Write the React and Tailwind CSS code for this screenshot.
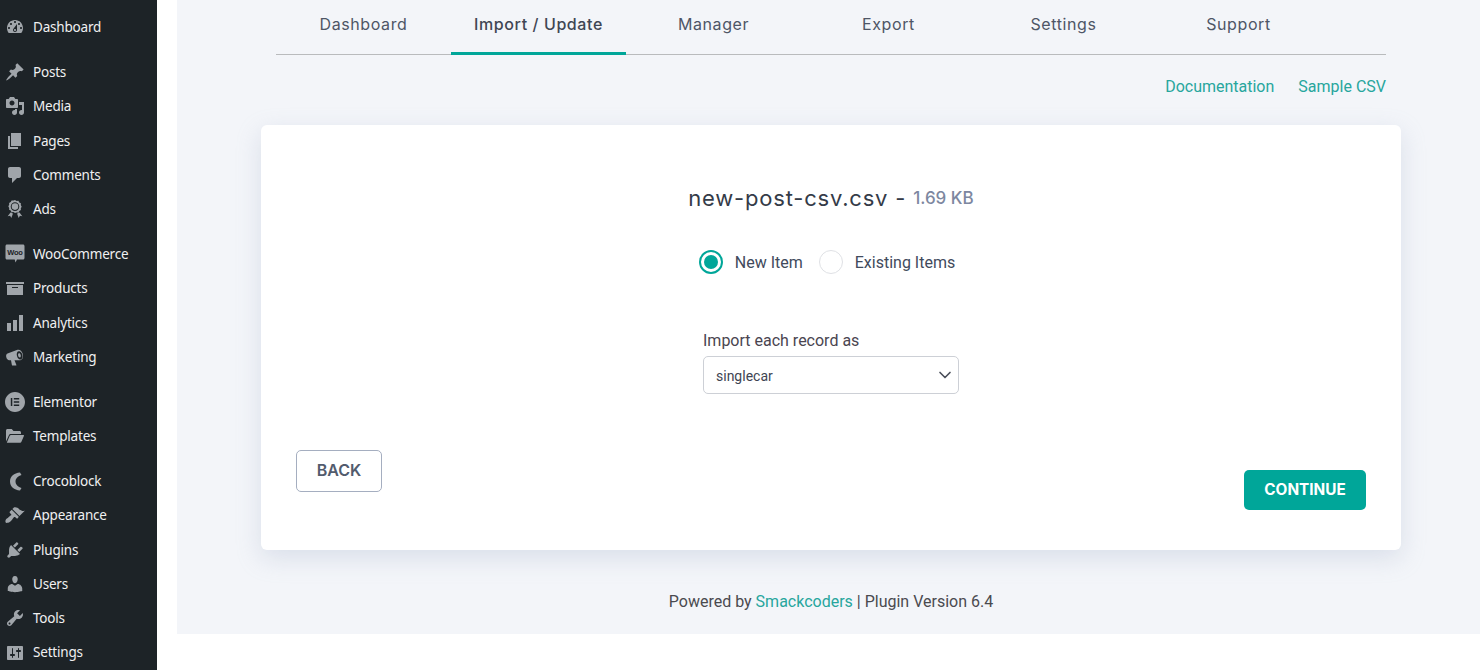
import React from "react";
import { ChevronDown } from "lucide-react";

const icons = {
  dashboard: "M3.76 16h12.48c1.1-1.37 1.76-3.11 1.76-5 0-4.42-3.58-8-8-8s-8 3.58-8 8c0 1.89.66 3.63 1.76 5zM10 4c.55 0 1 .45 1 1s-.45 1-1 1-1-.45-1-1 .45-1 1-1zM6 6c.55 0 1 .45 1 1s-.45 1-1 1-1-.45-1-1 .45-1 1-1zm8 0c.55 0 1 .45 1 1s-.45 1-1 1-1-.45-1-1 .45-1 1-1zm-5.37 5.55L12 7v6c0 1.1-.9 2-2 2s-2-.9-2-2c0-.57.24-1.08.63-1.45zM4 10c.55 0 1 .45 1 1s-.45 1-1 1-1-.45-1-1 .45-1 1-1zm12 0c.55 0 1 .45 1 1s-.45 1-1 1-1-.45-1-1 .45-1 1-1zm-5 3c0-.55-.45-1-1-1s-1 .45-1 1 .45 1 1 1 1-.45 1-1z",
  posts: "M10.44 3.02l1.82-1.82 6.36 6.35-1.83 1.82c-1.05-.68-2.48-.57-3.41.36l-.75.75c-.92.93-1.04 2.35-.35 3.41l-1.83 1.82-2.41-2.41-2.8 2.79c-.42.42-3.38 2.71-3.8 2.29s1.86-3.39 2.28-3.81l2.79-2.79L4.1 9.36l1.83-1.82c1.05.69 2.48.57 3.4-.36l.75-.75c.93-.92 1.05-2.35.36-3.41z",
  media: "M13 11V4c0-.55-.45-1-1-1h-1.67L9 1H5L3.67 3H2c-.55 0-1 .45-1 1v7c0 .55.45 1 1 1h10c.55 0 1-.45 1-1zM7 4.5c1.38 0 2.5 1.12 2.5 2.5S8.38 9.5 7 9.5 4.5 8.38 4.5 7 5.62 4.5 7 4.5zM14 6h5v10.5c0 1.38-1.12 2.5-2.5 2.5S14 17.88 14 16.5s1.12-2.5 2.5-2.5c.17 0 .34.02.5.05V9h-3V6zm-4 8.05V13h2v3.5c0 1.38-1.12 2.5-2.5 2.5S7 17.88 7 16.5 8.12 14 9.5 14c.17 0 .34.02.5.05z",
  pages: "M6 15V2h10v13H6zm-1 1h8v2H3V5h2v11z",
  comments: "M5 2h9c1.1 0 2 .9 2 2v7c0 1.1-.9 2-2 2h-2l-5 5v-5H5c-1.1 0-2-.9-2-2V4c0-1.1.9-2 2-2z",
  ads: "M10 1l1.600.9 1.800-.1.9 1.600 1.600.9-.1 1.800.9 1.600-.9 1.600.1 1.800-1.600.9-.9 1.600-1.800-.1L10 14l-1.600-.9-1.800.1-.9-1.600-1.600-.9.1-1.800-.9-1.600.9-1.600-.1-1.800 1.600-.9.9-1.600 1.800.1zm0 2.300a4.300 4.300 0 1 0 0 8.600 4.300 4.300 0 0 0 0-8.600zm0 1a3.300 3.300 0 1 1 0 6.600 3.300 3.300 0 0 1 0-6.600zM5.500 13.600l1.300.2 1.100 1-1.600 4.200-1.200-2.200-2.400.4zm9 0l-1.300.2-1.100 1 1.600 4.200 1.200-2.200 2.400.4z",
  products: "M19 4v2H1V4h18zM2 7h16v10H2V7zm11 3V9H7v1h6z",
  analytics: "M18 18V2h-4v16h4zm-6 0V7H8v11h4zm-6 0v-8H2v8h4z",
  marketing: "M12.500 2.800c2.400-.7 4.600 1.500 5.300 4.300.7 2.800 0 5.600-2.400 6.200H9.500l1.900 4.600c.1.400-.2.700-.5.700H7.500c-.3 0-.6-.3-.6-.6L6 13.300H4.500C3 13.500 1.700 12 1.300 10.300.8 8.500 1.300 7 2.500 6.500zm1 1.400c-1.600.4-2.100 2.600-1.500 4.900.6 2.300 2.200 3.700 3.800 3.300 1.600-.4 2.100-2.600 1.500-4.900-.6-2.300-2.200-3.700-3.800-3.300zm.4 2.100c.8-.2 1.500.5 1.800 1.700.3 1.200.1 2.300-.7 2.500-.8.200-1.500-.5-1.800-1.700-.3-1.200-.1-2.300.7-2.500z",
  elementor: "M10 0C4.500 0 0 4.500 0 10s4.500 10 10 10 10-4.500 10-10S15.500 0 10 0zM7.300 14H5.800V6h1.500v8zm6.900 0H8.800v-1.500h5.400V14zm0-3.250H8.800v-1.500h5.400v1.500zm0-3.250H8.800V6h5.400v1.500z",
  templates: "M1 4.500C1 3.700 1.700 3 2.500 3h4.200l1.800 2h6c.8 0 1.500.7 1.500 1.500V8H6c-1 0-1.800.5-2.200 1.400L1 15.500V4.500zM4.700 9.800C5 9.300 5.500 9 6 9h12.500c.4 0 .6.400.5.700l-2.700 6.300c-.2.500-.6.700-1.100.7H1.800z",
  crocoblock: "M15 1.500C9 2 5 5.500 5 10.500s4 8.500 10 9l1.500-2.500c-3.500-1-6-3.500-6-6.500s2.500-5.500 6-6.500z",
  appearance: "M14.480 11.060L7.410 3.990l1.500-1.500c.5-.56 2.300-.47 3.510.32 1.210.8 1.430 1.280 2.910 2.100 1.180.64 2.450 1.260 4.450.85zm-.71.71L6.700 4.700 4.930 6.470c-.39.39-.39 1.020 0 1.410l1.060 1.060c.39.39.39 1.030 0 1.420-.6.6-1.430 1.110-2.210 1.690-.35.26-.7.53-1.010.84C1.430 13.230.4 14.460.4 16.390c0 .95.68 1.630 1.470 1.470 1.960-.06 3.180-1.080 4.520-2.420.31-.31.58-.66.84-1.010.58-.78 1.090-1.610 1.690-2.210.39-.39 1.020-.39 1.410 0l1.060 1.060c.39.39 1.030.39 1.420 0z",
  plugins: "M13.110 4.360L9.870 7.600 8 5.730l3.240-3.240c.35-.34 1.050-.2 1.560.32.52.51.66 1.210.31 1.550zm-8 1.770l.91-1.120 9.010 9.010-1.190.84c-.71.71-2.630 1.160-3.820 1.160H6.140L4.900 17.260c-.59.59-1.540.59-2.120 0-.59-.58-.59-1.530 0-2.120l1.240-1.240v-3.880c0-1.130.4-3.190 1.090-3.890zm7.260 3.970l3.240-3.240c.34-.35 1.040-.21 1.550.31.52.51.66 1.210.31 1.550l-3.240 3.250z",
  users: "M10 9.250c-2.270 0-2.730-3.440-2.730-3.440C7 4.020 7.820 2 9.970 2c2.160 0 2.980 2.020 2.710 3.810 0 0-.41 3.440-2.680 3.440zm0 2.570L12.720 10c2.390 0 4.520 2.330 4.520 4.530v2.490s-3.650 1.130-7.240 1.130c-3.650 0-7.240-1.130-7.240-1.130v-2.490c0-2.250 1.940-4.480 4.470-4.480z",
  tools: "M16.680 9.770c-1.340 1.340-3.300 1.670-4.950.99l-5.410 6.520c-.99.99-2.590.99-3.580 0s-.99-2.59 0-3.570l6.520-5.420c-.68-1.650-.35-3.610.99-4.950 1.280-1.280 3.120-1.620 4.720-1.060l-2.890 2.890 2.820 2.820 2.860-2.870c.53 1.580.18 3.390-1.080 4.650zM3.810 16.210c.4.39 1.040.39 1.430 0 .4-.4.4-1.040 0-1.430-.39-.4-1.030-.4-1.430 0-.39.39-.39 1.030 0 1.430z",
  settings: "M18 16V4c0-.55-.45-1-1-1H3c-.55 0-1 .45-1 1v12c0 .55.45 1 1 1h14c.55 0 1-.45 1-1zM8 11h1c.55 0 1 .45 1 1s-.45 1-1 1H8v1.500c0 .28-.22.5-.5.5s-.5-.22-.5-.5V13H6c-.55 0-1-.45-1-1s.45-1 1-1h1V5.500c0-.28.22-.5.5-.5s.5.22.5.5V11zm5-2h-1c-.55 0-1-.45-1-1s.45-1 1-1h1V5.500c0-.28.22-.5.5-.5s.5.22.5.5V7h1c.55 0 1 .45 1 1s-.45 1-1 1h-1v5.500c0 .28-.22.5-.5.5s-.5-.22-.5-.5V9z",
};

const menu = [
  [["Dashboard", "dashboard"]],
  [["Posts", "posts"], ["Media", "media"], ["Pages", "pages"], ["Comments", "comments"], ["Ads", "ads"]],
  [["WooCommerce", "woo"], ["Products", "products"], ["Analytics", "analytics"], ["Marketing", "marketing"]],
  [["Elementor", "elementor"], ["Templates", "templates"]],
  [["Crocoblock", "crocoblock"], ["Appearance", "appearance"], ["Plugins", "plugins"], ["Users", "users"], ["Tools", "tools"], ["Settings", "settings"]],
];

const tabs = ["Dashboard", "Import / Update", "Manager", "Export", "Settings", "Support"];

const MenuIcon = ({ name }) => {
  if (name === "woo") {
    return (
      <svg viewBox="0 0 20 20" className="w-5 h-5 fill-[#a0a5aa]">
        <path d="M2 .5h16c.8 0 1.500.7 1.500 1.500v12c0 .8-.7 1.500-1.500 1.500h-6l-1.500 3-.8-3H2c-.8 0-1.500-.7-1.500-1.500V2C.5 1.200 1.200.5 2 .5z" />
        <text x="10" y="10.500" textAnchor="middle" fontSize="7.500" fontWeight="700" fontFamily="Liberation Sans, sans-serif" fill="#1d2327">Woo</text>
      </svg>
    );
  }
  return (
    <svg viewBox="0 0 20 20" fillRule="evenodd" className="w-5 h-5 fill-[#a0a5aa]">
      <path d={icons[name]} />
    </svg>
  );
};

const Sidebar = () => (
  <aside className="w-[157px] shrink-0 h-[670px] overflow-hidden bg-[#1d2327] pt-[10px] flex flex-col gap-[10.6px]">
    {menu.map((group, i) => (
      <div key={i}>
        {group.map(([label, icon]) => (
          <div key={label} className="h-[34.3px] flex items-center pl-[5px] gap-2 text-[13.5px] text-[#f0f0f1] font-['Noto_Sans',sans-serif] tracking-[-0.2px]">
            <MenuIcon name={icon} />
            <span>{label}</span>
          </div>
        ))}
      </div>
    ))}
  </aside>
);

const Radio = ({ checked, label }) => (
  <div className="flex items-center gap-[12px]">
    <span className={checked ? "w-6 h-6 rounded-full border-2 border-[#00a699] flex items-center justify-center bg-white" : "w-6 h-6 rounded-full border border-[#dfe1e5] bg-white"}>
      {checked && <span className="w-[14px] h-[14px] rounded-full bg-[#00a699]" />}
    </span>
    <span className="text-[16px] leading-[22px] text-[#414a5c] pt-[2px]">{label}</span>
  </div>
);

export default function App() {
  return (
    <div className="flex w-[1480px] h-[670px] overflow-hidden bg-white font-['Roboto',sans-serif]">
      <Sidebar />
      <main className="ml-5 w-[1303px] h-[634px] bg-[#f3f5f9]">
        <nav className="ml-[99px] w-[1110px] h-[55px] flex border-b border-[#b9bbbd] font-['Inter',sans-serif] text-[16px] tracking-[0.6px]">
          {tabs.map((t) => (
            <div
              key={t}
              className={
                t === "Import / Update"
                  ? "w-[175px] h-[55px] pb-[5px] flex items-center justify-center border-b-[3px] border-[#00a699] text-[#3f4654] font-medium"
                  : "w-[175px] h-[54px] pb-[6px] flex items-center justify-center text-[#4e5666]"
              }
            >
              {t}
            </div>
          ))}
        </nav>
        <div className="ml-[99px] w-[1110px] mt-[22px] h-5 flex justify-end gap-6 text-[16px] leading-5 text-[#27a69d]">
          <span>Documentation</span>
          <span>Sample CSV</span>
        </div>
        <section className="ml-[84px] mt-[28px] w-[1140px] h-[425px] bg-white rounded-md shadow-[0_8px_24px_rgba(160,172,198,0.3)] flex flex-col">
          <h2 className="mt-[56px] h-[34px] flex items-center justify-center gap-[7px] font-['Inter',sans-serif] text-[22px] tracking-[0.8px] text-[#343b48]">
            <span>new-post-csv.csv -</span>
            <span className="pt-[2px] text-[17px] tracking-normal font-medium text-[#7d87a0]">1.69 KB</span>
          </h2>
          <div className="mt-[35px] flex justify-center gap-[16px] pr-2">
            <Radio checked label="New Item" />
            <Radio label="Existing Items" />
          </div>
          <div className="mt-[56px] ml-[442px] w-[256px]">
            <label className="block text-[16px] leading-[20px] pt-[1px] text-[#4a4550] mb-[5px]">Import each record as</label>
            <div className="relative">
              <select defaultValue="singlecar" className="w-[256px] h-[38px] appearance-none bg-white rounded-[5px] border border-[#cdd0d6] pl-3 pt-[2px] text-[14px] text-[#3e4452] outline-none">
                <option>singlecar</option>
              </select>
              <ChevronDown className="absolute right-[4px] top-[9px] w-5 h-5 text-[#4a4f5a] pointer-events-none" strokeWidth={2} />
            </div>
          </div>
          <div className="mt-[56px] px-[35px] flex justify-between">
            <button className="w-[86px] h-[42px] pb-[2px] rounded-[5px] border border-[#a5aec0] bg-white font-['Inter',sans-serif] font-semibold text-[16px] text-[#525b6d]">BACK</button>
            <button className="mt-[20px] w-[122px] h-[40px] rounded-[5px] bg-[#00a699] font-['Inter',sans-serif] font-bold text-[15.3px] text-white">CONTINUE</button>
          </div>
        </section>
        <p className="ml-[84px] w-[1140px] mt-[42px] text-center text-[16px] leading-5 text-[#4a4a4f]">
          Powered by <span className="text-[#27a69d]">Smackcoders</span> | Plugin Version 6.4
        </p>
      </main>
    </div>
  );
}
